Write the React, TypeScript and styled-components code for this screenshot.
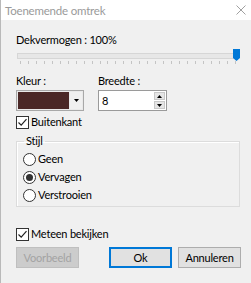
import React from "react";
import styled, { createGlobalStyle } from "styled-components";

const Global = createGlobalStyle`
  html, body { margin: 0; padding: 0; background: #f0f0f0; }
  body { font-family: Lato, "Noto Sans", sans-serif; font-size: 11px; letter-spacing: -0.2px; color: #000; }
`;

const Window = styled.div`
  width: 251px;
  height: 283px;
  box-sizing: border-box;
  border-left: 1px solid #b9b9b9;
  background: #f0f0f0;
  display: flex;
  flex-direction: column;
  overflow: hidden;
`;

const TitleBar = styled.div`
  height: 20px;
  background: #ffffff;
  display: flex;
  align-items: center;
  justify-content: space-between;
  padding: 0 4px 0 4px;
  color: #9a9a9a;
  font-size: 11.5px;
`;

const Body = styled.div`
  display: flex;
  flex-direction: column;
  padding: 12px 9px 0 15px;
`;

const Label = styled.div`
  line-height: 16px;
  height: 16px;
  white-space: nowrap;
`;

const SliderWrap = styled.div`
  position: relative;
  height: 18px;
  margin-top: 0px;
  margin-right: 2px;
`;

const Track = styled.div`
  position: absolute;
  left: 1px;
  right: 4px;
  top: 5px;
  height: 4px;
  background: #e7e7e7;
  border: 1px solid #d6d6d6;
`;

const Thumb = styled.svg`
  position: absolute;
  right: 0px;
  top: 1px;
`;

const Ticks = styled.div`
  position: absolute;
  left: 4px;
  right: 4px;
  top: 13px;
  height: 3px;
  display: flex;
  justify-content: space-between;
`;

const Tick = styled.span`
  width: 1px;
  height: 3px;
  background: #c4c4c4;
`;

const FieldRow = styled.div`
  display: flex;
  gap: 14px;
  margin-top: 7px;
`;

const Field = styled.div`
  display: flex;
  flex-direction: column;
  gap: 1px;
`;

const Combo = styled.div`
  width: 68px;
  height: 21px;
  box-sizing: border-box;
  border: 1px solid #a8a8a8;
  background: #e9e9e9;
  display: flex;
  align-items: stretch;
  padding: 1px;
  gap: 1px;
`;

const Swatch = styled.div`
  flex: 1;
  background: #4a2726;
`;

const DropBtn = styled.div`
  width: 12px;
  display: flex;
  align-items: center;
  justify-content: center;
  background: #f0f0f0;
`;

const Spin = styled.div`
  width: 69px;
  height: 21px;
  box-sizing: border-box;
  border: 1px solid #9a9a9a;
  background: #fff;
  display: flex;
  align-items: center;
  padding-left: 3px;
`;

const SpinText = styled.div`
  flex: 1;
  line-height: 16px;
`;

const SpinBtns = styled.div`
  width: 11px;
  height: 17px;
  margin-right: 1px;
  display: flex;
  flex-direction: column;
  gap: 1px;
`;

const SpinBtn = styled.div`
  flex: 1;
  background: #e5e5e5;
  border: 1px solid #c8c8c8;
  display: flex;
  align-items: center;
  justify-content: center;
`;

const CheckRow = styled.label<{ $mt: number }>`
  display: flex;
  align-items: center;
  gap: 2px;
  margin-top: ${(p) => p.$mt}px;
  height: 16px;
  line-height: 16px;
`;

const Box = styled.span`
  width: 13px;
  height: 13px;
  box-sizing: border-box;
  border: 1px solid #333;
  background: #fff;
  display: flex;
  align-items: center;
  justify-content: center;
`;

const Group = styled.fieldset`
  margin: 3px 2px 0 0;
  padding: 2px 0 3px 6px;
  border: 1px solid #dcdcdc;
  box-shadow: 1px 1px 0 #fff inset;
  display: flex;
  flex-direction: column;
  gap: 2px;
  min-width: 0;
`;

const Legend = styled.legend`
  padding: 0 2px;
  margin-left: 1px;
  line-height: 16px;
`;

const RadioRow = styled.div`
  display: flex;
  align-items: center;
  gap: 2px;
  height: 16px;
  line-height: 16px;
`;

const Circle = styled.span<{ $on?: boolean }>`
  width: 13px;
  height: 13px;
  box-sizing: border-box;
  border: 1px solid #333;
  border-radius: 50%;
  background: #fff;
  display: flex;
  align-items: center;
  justify-content: center;
  &::after {
    content: "";
    width: 7px;
    height: 7px;
    border-radius: 50%;
    background: ${(p) => (p.$on ? "#333" : "transparent")};
  }
`;

const ButtonRow = styled.div`
  display: flex;
  margin-top: 5px;
  margin-right: 1px;
`;

const Button = styled.div<{ $variant?: "disabled" | "default" | "normal" }>`
  width: 63px;
  height: 21px;
  box-sizing: border-box;
  display: flex;
  align-items: center;
  justify-content: center;
  background: ${(p) => (p.$variant === "disabled" ? "#cccccc" : "#e1e1e1")};
  color: ${(p) => (p.$variant === "disabled" ? "#a3a3a3" : "#000")};
  border: ${(p) =>
    p.$variant === "default"
      ? "2px solid #0078d7"
      : p.$variant === "disabled"
      ? "1px solid #bfbfbf"
      : "1px solid #adadad"};
`;

const Spacer = styled.div`
  flex: 1;
`;

const Check = () => (
  <svg width="11" height="11" viewBox="0 0 11 11">
    <path d="M1.5 5.5 L4.2 8.2 L9.5 2.2" fill="none" stroke="#222" strokeWidth="1.2" />
  </svg>
);

export default function App() {
  return (
    <>
      <Global />
      <Window>
        <TitleBar>
          <span>Toenemende omtrek</span>
          <svg width="10" height="10" viewBox="0 0 10 10" style={{ marginRight: 1 }}>
            <path d="M0.5 0.5 L9.5 9.5 M9.5 0.5 L0.5 9.5" stroke="#a0a0a0" strokeWidth="1" />
          </svg>
        </TitleBar>
        <Body>
          <Label>Dekvermogen : 100%</Label>
          <SliderWrap>
            <Track />
            <Ticks>
              {Array.from({ length: 28 }).map((_, i) => (
                <Tick key={i} />
              ))}
            </Ticks>
            <Thumb width="7" height="12" viewBox="0 0 7 12">
              <path d="M0 0 H7 V9 L3.5 12 L0 9 Z" fill="#0078d7" />
            </Thumb>
          </SliderWrap>
          <FieldRow>
            <Field>
              <Label>Kleur :</Label>
              <Combo>
                <Swatch />
                <DropBtn>
                  <svg width="5" height="3" viewBox="0 0 5 3">
                    <path d="M0 0 H5 L2.5 3 Z" fill="#000" />
                  </svg>
                </DropBtn>
              </Combo>
            </Field>
            <Field>
              <Label>Breedte :</Label>
              <Spin>
                <SpinText>8</SpinText>
                <SpinBtns>
                  <SpinBtn>
                    <svg width="5" height="3" viewBox="0 0 5 3">
                      <path d="M0 3 H5 L2.5 0 Z" fill="#000" />
                    </svg>
                  </SpinBtn>
                  <SpinBtn>
                    <svg width="5" height="3" viewBox="0 0 5 3">
                      <path d="M0 0 H5 L2.5 3 Z" fill="#000" />
                    </svg>
                  </SpinBtn>
                </SpinBtns>
              </Spin>
            </Field>
          </FieldRow>
          <CheckRow $mt={3}>
            <Box>
              <Check />
            </Box>
            <span>Buitenkant</span>
          </CheckRow>
          <Group>
            <Legend>Stijl</Legend>
            <RadioRow>
              <Circle />
              <span>Geen</span>
            </RadioRow>
            <RadioRow>
              <Circle $on />
              <span>Vervagen</span>
            </RadioRow>
            <RadioRow>
              <Circle />
              <span>Verstrooien</span>
            </RadioRow>
          </Group>
          <CheckRow $mt={19}>
            <Box>
              <Check />
            </Box>
            <span>Meteen bekijken</span>
          </CheckRow>
          <ButtonRow>
            <Button $variant="disabled">Voorbeeld</Button>
            <Spacer />
            <Button $variant="default">Ok</Button>
            <Button $variant="normal" style={{ marginLeft: 6 }}>
              Annuleren
            </Button>
          </ButtonRow>
        </Body>
      </Window>
    </>
  );
}
